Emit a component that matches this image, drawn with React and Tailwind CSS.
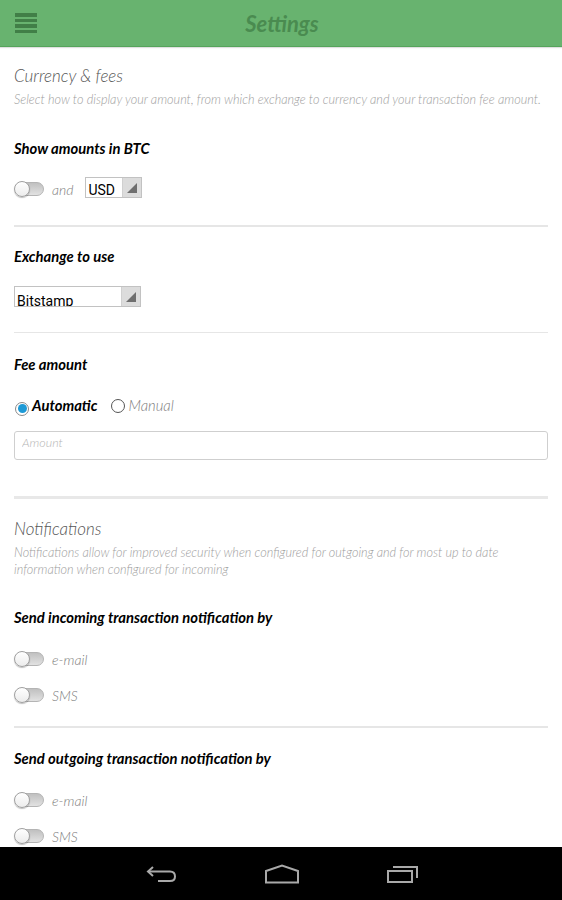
import React, { useState } from "react";

function Toggle() {
  return (
    <span className="relative inline-block w-[29px] h-[14px] shrink-0 rounded-full border border-[#b4b4b4] bg-gradient-to-b from-[#c0c0c0] to-[#e2e2e2]">
      <span className="absolute left-[-2px] top-[-2px] w-[16px] h-[16px] rounded-full border border-[#a0a0a0] bg-gradient-to-b from-white to-[#ececec] shadow-[0_1px_1px_rgba(0,0,0,0.25)]" />
    </span>
  );
}

function Select({ value, width, textClass }) {
  return (
    <div className={`flex h-[21px] border border-[#c2c2c2] bg-white overflow-hidden ${width}`}>
      <div className={`flex-1 pl-[2px] text-[14px] text-black font-['Roboto',sans-serif] not-italic ${textClass}`}>{value}</div>
      <div className="relative w-[19px] bg-[#dcdcdc] border-l border-[#d0d0d0]">
        <svg className="absolute right-[4px] bottom-[4px]" width="10" height="10" viewBox="0 0 10 10">
          <polygon points="10,0 10,10 0,10" fill="#6f6f6f" />
        </svg>
      </div>
    </div>
  );
}

function Radio({ checked }) {
  return (
    <span className={`inline-flex items-center justify-center w-[14px] h-[14px] rounded-full border ${checked ? "border-[#8a8a8a] bg-white" : "border-[#555] bg-white"}`}>
      {checked && <span className="w-[9px] h-[9px] rounded-full bg-[#1e9ad6]" />}
    </span>
  );
}

function Heading({ children, className = "" }) {
  return <div className={`text-[17px] leading-[22px] font-light italic text-[#555] ${className}`}>{children}</div>;
}

function Label({ children, className = "" }) {
  return <div className={`text-[14.8px] leading-[20px] font-bold italic text-black ${className}`}>{children}</div>;
}

function Desc({ children, className = "" }) {
  return <div className={`text-[12.7px] leading-[17px] font-light italic text-[#9d9d9d] ${className}`}>{children}</div>;
}

function ToggleRow({ label, className = "" }) {
  return (
    <div className={`flex items-center h-[20px] pl-[1px] gap-[8px] ${className}`}>
      <Toggle />
      <span className="text-[14px] font-light italic text-[#7c7c7c]">{label}</span>
    </div>
  );
}

export default function App() {
  const [amount, setAmount] = useState("");

  return (
    <div className="flex flex-col h-[900px] bg-white font-['Lato',sans-serif] overflow-hidden">
      <header className="relative shrink-0 h-[47px] bg-[#68b36f] border-b border-[#56a45c] shadow-[0_1px_1px_rgba(0,0,0,0.12)] flex items-center">
        <div className="ml-[15px] flex flex-col gap-[2px] w-[22px]">
          <span className="h-[4px] bg-[#417f47]" />
          <span className="h-[3px] bg-[#417f47]" />
          <span className="h-[4px] bg-[#417f47]" />
          <span className="h-[3px] bg-[#417f47]" />
        </div>
        <div className="absolute inset-x-0 top-0 h-[46px] flex items-center justify-center pointer-events-none">
          <span className="text-[22px] font-bold italic text-[#4a8b50] pl-[2px]">Settings</span>
        </div>
      </header>

      <main className="flex-1 overflow-hidden px-[14px]">
        <Heading className="mt-[18px]">Currency &amp; fees</Heading>
        <Desc className="mt-[4px]">Select how to display your amount, from which exchange to currency and your transaction fee amount.</Desc>

        <Label className="mt-[30px]">Show amounts in BTC</Label>
        <div className="mt-[19px] flex items-end">
          <div className="flex items-center h-[20px] pl-[1px] gap-[8px] mb-[-1px]">
            <Toggle />
            <span className="text-[14px] font-light italic text-[#7c7c7c]">and</span>
          </div>
          <div className="ml-[12px]">
            <Select value="USD" width="w-[57px]" textClass="leading-[24px]" />
          </div>
        </div>

        <div className="mt-[27px] h-[2px] bg-[#e6e6e6]" />

        <Label className="mt-[19px]">Exchange to use</Label>
        <div className="mt-[20px]">
          <Select value="Bitstamp" width="w-[127px]" textClass="leading-[27px] pt-[1px]" />
        </div>

        <div className="mt-[25px] h-[1px] bg-[#e6e6e6]" />

        <Label className="mt-[21px]">Fee amount</Label>
        <div className="mt-[21px] flex items-center h-[20px] pl-[1px]">
          <span className="mt-[4px]"><Radio checked /></span>
          <span className="ml-[3px] text-[14.8px] font-bold italic text-black">Automatic</span>
          <span className="ml-[14px] mt-[4px]"><Radio /></span>
          <span className="ml-[3px] text-[14.8px] font-light italic text-[#7c7c7c]">Manual</span>
        </div>
        <input
          value={amount}
          onChange={(e) => setAmount(e.target.value)}
          placeholder="Amount"
          className="mt-[16px] block w-full h-[29px] rounded-[3px] border border-[#cfcfcf] px-[7px] pb-[6px] text-[12.5px] font-light italic placeholder:text-[#b5b5b5] outline-none"
        />

        <div className="mt-[36px] h-[3px] bg-[#e8e8e8]" />

        <Heading className="mt-[19px]">Notifications</Heading>
        <Desc className="mt-[4px]">Notifications allow for improved security when configured for outgoing and for most up to date information when configured for incoming</Desc>

        <Label className="mt-[29px]">Send incoming transaction notification by</Label>
        <ToggleRow label="e-mail" className="mt-[22px]" />
        <ToggleRow label="SMS" className="mt-[16px]" />

        <div className="mt-[21px] h-[2px] bg-[#e6e6e6]" />

        <Label className="mt-[20px]">Send outgoing transaction notification by</Label>
        <ToggleRow label="e-mail" className="mt-[22px]" />
        <ToggleRow label="SMS" className="mt-[16px]" />
      </main>

      <nav className="shrink-0 h-[53px] bg-black flex items-center pl-[146px]">
        <svg width="32" height="20" viewBox="0 0 32 20" fill="none" stroke="#a9a9a9" strokeWidth="2">
          <path d="M7 3 L2 7.5 L7 12" />
          <path d="M2 7.5 H24 Q29 7.5 29 12.5 Q29 17 24 17 H12" />
        </svg>
        <svg className="ml-[86px]" width="36" height="20" viewBox="0 0 36 20" fill="none" stroke="#a9a9a9" strokeWidth="2">
          <path d="M2 7 L18 1.5 L34 7 V18.5 H2 Z" />
        </svg>
        <svg className="ml-[86px]" width="34" height="20" viewBox="0 0 34 20" fill="none" stroke="#a9a9a9" strokeWidth="2">
          <rect x="2" y="7" width="24" height="11" />
          <path d="M7 3 H31 V14" />
        </svg>
      </nav>
    </div>
  );
}
